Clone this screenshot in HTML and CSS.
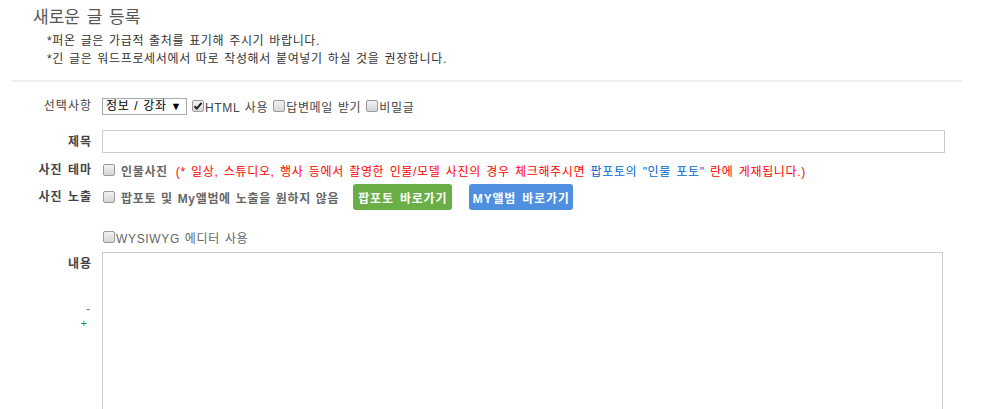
FILE: index.html
```
<!DOCTYPE html>
<html lang="ko">
<head>
    <meta charset="UTF-8">
    <title>새로운 글 등록</title>
    <link rel="stylesheet" href="styles.css">
</head>
<body>
    <div class="page">
        <div class="head">
            <h2 class="title">새로운 글 등록</h2>
            <p class="note">*퍼온 글은 가급적 출처를 표기해 주시기 바랍니다.</p>
            <p class="note">*긴 글은 워드프로세서에서 따로 작성해서 붙여넣기 하실 것을 권장합니다.</p>
        </div>
        <div class="divider"></div>

        <form class="write-form" id="writeForm">
            <div class="row row-opt">
                <div class="label">선택사항</div>
                <div class="field">
                    <span class="select-wrap">
                        <select class="select" name="category">
                            <option>정보 / 강좌</option>
                        </select>
                    </span>
                    <label class="check"><span class="box checked"><svg viewBox="0 0 12 12" width="12" height="12"><path d="M2.5 6.2 L4.8 8.6 L9.6 2.8" fill="none" stroke="#222" stroke-width="2"/></svg></span>HTML 사용</label>
                    <label class="check"><span class="box"></span>답변메일 받기</label>
                    <label class="check"><span class="box"></span>비밀글</label>
                </div>
            </div>

            <div class="row row-subject">
                <div class="label bold">제목</div>
                <div class="field">
                    <input type="text" class="text-input" name="subject">
                </div>
            </div>

            <div class="row row-theme">
                <div class="label bold">사진 테마</div>
                <div class="field">
                    <label class="check gap"><span class="box"></span><b class="gray">인물사진</b></label>
                    <span class="warn">(* 일상, 스튜디오, 행사 등에서 촬영한 인물/모델 사진의 경우 체크해주시면 <span class="blue">팝포토의 "인물 포토"</span> 란에 게재됩니다.)</span>
                </div>
            </div>

            <div class="row row-expose">
                <div class="label bold">사진 노출</div>
                <div class="field">
                    <label class="check gap"><span class="box"></span><b class="gray">팝포토 및 My앨범에 노출을 원하지 않음</b></label>
                    <button type="button" class="btn btn-green">팝포토 바로가기</button>
                    <button type="button" class="btn btn-blue">MY앨범 바로가기</button>
                </div>
            </div>

            <div class="row row-editor">
                <div class="label"></div>
                <div class="field">
                    <label class="check editor"><span class="box"></span>WYSIWYG 에디터 사용</label>
                </div>
            </div>

            <div class="row row-content">
                <div class="label bold">
                    <div>내용</div>
                    <div class="resize minus">-</div>
                    <div class="resize plus">+</div>
                </div>
                <div class="field">
                    <textarea class="content" name="content"></textarea>
                </div>
            </div>
        </form>
    </div>
</body>
</html>
```

FILE: styles.css
```
body {
    margin: 0;
    font-family: "Liberation Sans", "Noto Sans CJK KR", sans-serif;
    font-size: 12px;
    letter-spacing: 0.65px;
    color: #444;
    background: #fff;
    overflow: hidden;
}
.page {
    padding: 0 26px 0 12px;
}
.head {
    padding-top: 8px;
}
.title {
    margin: 0 0 4px 21px;
    font-size: 17px;
    line-height: 20px;
    font-weight: normal;
    letter-spacing: 0;
    color: #555;
    word-spacing: 2px;
}
.note {
    margin: 0 0 0 35px;
    line-height: 18px;
    color: #333;
    word-spacing: 1px;
}
.divider {
    height: 2px;
    background: #eee;
    margin-top: 12px;
}
.write-form {
    padding-top: 14px;
}
.row {
    display: flex;
    align-items: center;
}
.label {
    width: 80px;
    margin-right: 10px;
    text-align: right;
    line-height: 20px;
    flex-shrink: 0;
    color: #444;
    letter-spacing: 1px;
    word-spacing: 1px;
}
.bold {
    font-weight: bold;
}
.field {
    flex: 1;
    display: flex;
    align-items: center;
    white-space: nowrap;
}
.row-opt { height: 20px; }
.row-subject { height: 23px; margin-top: 14px; }
.row-theme { height: 20px; margin-top: 7px; }
.row-expose { height: 26px; margin-top: 4px; }
.row-editor { height: 18px; margin-top: 18px; }
.row-content { margin-top: 6px; align-items: flex-start; }

.select-wrap {
    position: relative;
    display: inline-block;
}
.select {
    -webkit-appearance: none;
    appearance: none;
    width: 85px;
    height: 17px;
    padding: 0 0 0 3px;
    margin: 0;
    border: 1px solid #a9a9a9;
    border-radius: 0;
    background: #fff;
    font-family: inherit;
    font-size: 12px;
    letter-spacing: 0.65px;
    color: #000;
    word-spacing: 1px;
}
.select-wrap::after {
    content: "▼";
    position: absolute;
    right: 5px;
    top: 2px;
    font-size: 11px;
    line-height: 12px;
    color: #000;
}
.check {
    display: inline-flex;
    align-items: center;
    margin-left: 5px;
    color: #444;
    word-spacing: 1px;
}
.check.gap .box {
    margin-right: 6px;
}
.row-theme .check, .row-expose .check, .row-editor .check {
    margin-left: 1px;
}
.box {
    display: inline-block;
    box-sizing: border-box;
    width: 12px;
    height: 12px;
    margin-right: 1px;
    border: 1px solid #9a9a9a;
    border-radius: 2px;
    background: linear-gradient(#f2f2f2, #d6d6d6);
}
.box svg {
    display: block;
    margin: -1px 0 0 -1px;
}
.gray {
    color: #666;
}
.warn {
    color: #f00;
    margin-left: 8px;
    word-spacing: 1.4px;
}
.blue {
    color: #0066cc;
}
.text-input {
    box-sizing: border-box;
    width: 843px;
    height: 23px;
    margin: 0;
    border: 1px solid #ccc;
    padding: 2px 4px;
}
.btn {
    height: 26px;
    padding: 0;
    border: none;
    border-radius: 3px;
    color: #fff;
    font-family: inherit;
    font-size: 12px;
    font-weight: bold;
    letter-spacing: 0.8px;
    word-spacing: 2px;
}
.btn-green {
    margin-left: 14px;
    width: 99px;
    background: #69ae46;
}
.btn-blue {
    margin-left: 17px;
    width: 104px;
    background: #4f8fe0;
}
.editor {
    color: #666;
}
.row-content .label {
    padding-top: 2px;
}
.resize {
    font-weight: normal;
    font-size: 11px;
    line-height: 15px;
    margin-right: 1px;
}
.minus {
    margin-top: 27px;
    color: #555;
}
.plus {
    margin-right: 4px;
    color: #1f8a6a;
}
.content {
    box-sizing: border-box;
    width: 841px;
    height: 260px;
    margin: 0;
    border: 1px solid #ccc;
    resize: none;
}
```
